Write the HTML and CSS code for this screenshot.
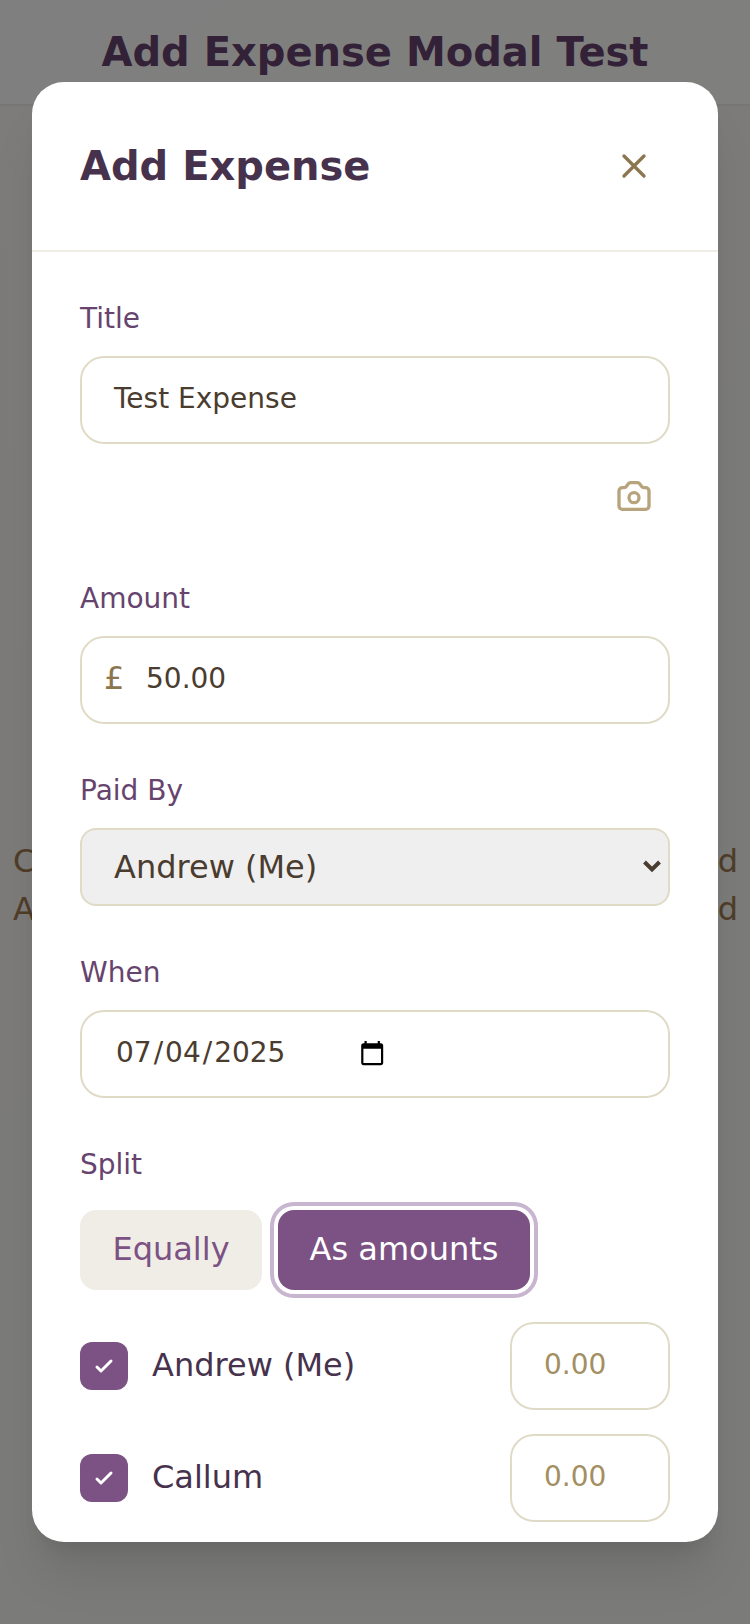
FILE: index.html
```html
<!DOCTYPE html>
<html lang="en">
<head>
<meta charset="utf-8">
<title>Add Expense Modal Test</title>
<link rel="stylesheet" href="styles.css">
</head>
<body>
<div class="page">
  <header class="page-header"><h1 class="page-title">Add Expense Modal Test</h1></header>
  <main class="page-main">
    <div class="page-line"><span>C</span><span>d</span></div>
    <div class="page-line"><span>A</span><span>d</span></div>
  </main>
</div>
<div class="overlay">
  <section class="modal">
    <header class="modal-header">
      <h2 class="modal-title">Add Expense</h2>
      <button class="icon-button close" type="button" aria-label="Close">
        <svg class="icon" viewBox="0 0 24 24"><path d="M6 18L18 6M6 6l12 12"/></svg>
      </button>
    </header>
    <div class="modal-body">
      <div class="field">
        <div class="label">Title</div>
        <div class="input">Test Expense</div>
        <button class="icon-button camera" type="button" aria-label="Scan receipt">
          <svg class="icon" viewBox="0 0 24 24"><path d="M3 9a2 2 0 012-2h.93a2 2 0 001.664-.89l.812-1.22A2 2 0 0110.07 4h3.86a2 2 0 011.664.89l.812 1.22A2 2 0 0018.07 7H19a2 2 0 012 2v9a2 2 0 01-2 2H5a2 2 0 01-2-2V9z"/><circle cx="12" cy="13" r="3"/></svg>
        </button>
      </div>
      <div class="field">
        <div class="label">Amount</div>
        <div class="input amount"><span class="currency">£</span><span>50.00</span></div>
      </div>
      <div class="field">
        <div class="label">Paid By</div>
        <div class="select">
          <span>Andrew (Me)</span>
          <svg class="chevron" viewBox="0 0 20 14"><path d="M2.5 3L10 10.5 17.5 3"/></svg>
        </div>
      </div>
      <div class="field">
        <div class="label">When</div>
        <div class="input date">
          <span class="date-text"><span class="part">07</span>/<span class="part">04</span>/<span class="part">2025</span></span>
          <svg class="calendar" viewBox="0 0 24 24"><path d="M20 3h-1V1h-2v2H7V1H5v2H4c-1.1 0-2 .9-2 2v16c0 1.1.9 2 2 2h16c1.1 0 2-.9 2-2V5c0-1.1-.9-2-2-2zm0 18H4V8h16v13z"/></svg>
        </div>
      </div>
      <div class="field">
        <div class="label">Split</div>
        <div class="modes">
          <button class="mode" type="button">Equally</button>
          <button class="mode mode-active" type="button">As amounts</button>
        </div>
        <div class="people">
          <div class="person">
            <span class="checkbox"><svg class="check" viewBox="0 0 24 24"><path d="M5 13l4 4L19 7"/></svg></span>
            <span class="person-name">Andrew (Me)</span>
            <div class="input share">0.00</div>
          </div>
          <div class="person">
            <span class="checkbox"><svg class="check" viewBox="0 0 24 24"><path d="M5 13l4 4L19 7"/></svg></span>
            <span class="person-name">Callum</span>
            <div class="input share">0.00</div>
          </div>
        </div>
      </div>
    </div>
  </section>
</div>
</body>
</html>
```

FILE: styles.css
```css
* { box-sizing: border-box; }

body {
  margin: 0;
  height: 1624px;
  font-family: "DejaVu Sans", sans-serif;
  font-size: 32px;
}

button {
  margin: 0;
  border: 0;
  font: inherit;
}

.page {
  display: flex;
  flex-direction: column;
  height: 1624px;
  background: linear-gradient(135deg, #faf8f4, #f6f6f5 70%);
}

.page-header {
  height: 106px;
  padding-top: 28px;
  border-bottom: 2px solid #efece5;
  background: linear-gradient(135deg, #ffffff, #fefefa);
}

.page-title {
  margin: 0;
  font-size: 40px;
  line-height: 48px;
  text-align: center;
  color: #674270;
}

.page-main {
  flex: 1;
  display: flex;
  flex-direction: column;
  justify-content: center;
  padding: 40px 12px 0 13px;
  color: #a07a50;
}

.page-line {
  display: flex;
  justify-content: space-between;
  line-height: 48px;
}

.overlay {
  position: absolute;
  inset: 0;
  display: flex;
  justify-content: center;
  align-items: center;
  height: 1624px;
  padding: 0 32px;
  background: rgba(0, 0, 0, 0.5);
}

.modal {
  width: 686px;
  height: 1460px;
  border-radius: 32px;
  background: #fff;
  box-shadow: 0 40px 50px -10px rgba(0, 0, 0, 0.1), 0 16px 20px -12px rgba(0, 0, 0, 0.1);
}

.modal-header {
  display: flex;
  justify-content: space-between;
  align-items: center;
  height: 170px;
  padding: 0 48px;
  border-bottom: 2px solid #f0ede6;
}

.modal-title {
  margin: 0;
  font-size: 40px;
  line-height: 56px;
  color: #47324d;
}

.icon-button {
  display: block;
  padding: 16px;
  background: none;
}

.icon {
  display: block;
  width: 40px;
  height: 40px;
  fill: none;
  stroke: currentColor;
  stroke-width: 2;
  stroke-linecap: round;
  stroke-linejoin: round;
}

.close { color: #8b7650; }

.camera {
  margin: 16px 0 0 auto;
  color: #b8a47c;
}

.modal-body {
  display: flex;
  flex-direction: column;
  gap: 48px;
  padding: 48px 48px 0;
}

.label {
  height: 56px;
  font-size: 28px;
  line-height: 38px;
  color: #66446e;
}

.input {
  display: flex;
  align-items: center;
  height: 88px;
  padding: 0 32px 2px;
  border: 2px solid #e0dbc7;
  border-radius: 24px;
  font-size: 28px;
  line-height: 36px;
  color: #4a3c2e;
}

.amount { padding-left: 22px; }

.currency {
  width: 42px;
  padding-bottom: 2px;
  font-size: 32px;
  color: #8b7650;
}

.select {
  display: flex;
  justify-content: space-between;
  align-items: center;
  height: 78px;
  padding: 0 6px 0 32px;
  border: 2px solid #e0dbc7;
  border-radius: 16px;
  background: #efefef;
  color: #4a3c2e;
}

.chevron {
  width: 20px;
  height: 14px;
  margin-bottom: 2px;
  fill: none;
  stroke: currentColor;
  stroke-width: 4;
}

.date-text {
  width: 245px;
  white-space: nowrap;
}

.part { padding: 0 2px; }

.calendar {
  width: 26.4px;
  height: 26.4px;
  fill: #000;
}

.modes {
  display: flex;
  gap: 16px;
  padding-top: 8px;
}

.mode {
  width: 182px;
  height: 80px;
  padding: 0 0 2px;
  border-radius: 16px;
  background: #f0ede6;
  color: #7b5283;
}

.mode-active {
  width: 252px;
  background: #7b5283;
  color: #fff;
  box-shadow: 0 0 0 4px #fff, 0 0 0 8px #c8b5cf;
}

.people {
  display: flex;
  flex-direction: column;
  gap: 24px;
  padding-top: 32px;
}

.person {
  display: flex;
  align-items: center;
  gap: 24px;
}

.checkbox {
  display: flex;
  justify-content: center;
  align-items: center;
  width: 48px;
  height: 48px;
  border-radius: 12px;
  background: #7b5283;
}

.check {
  width: 24px;
  height: 24px;
  fill: none;
  stroke: #fff;
  stroke-width: 3;
  stroke-linecap: round;
  stroke-linejoin: round;
}

.person-name {
  flex: 1;
  padding-bottom: 2px;
  line-height: 48px;
  color: #47324d;
}

.share {
  width: 160px;
  color: #a38f62;
}
```
